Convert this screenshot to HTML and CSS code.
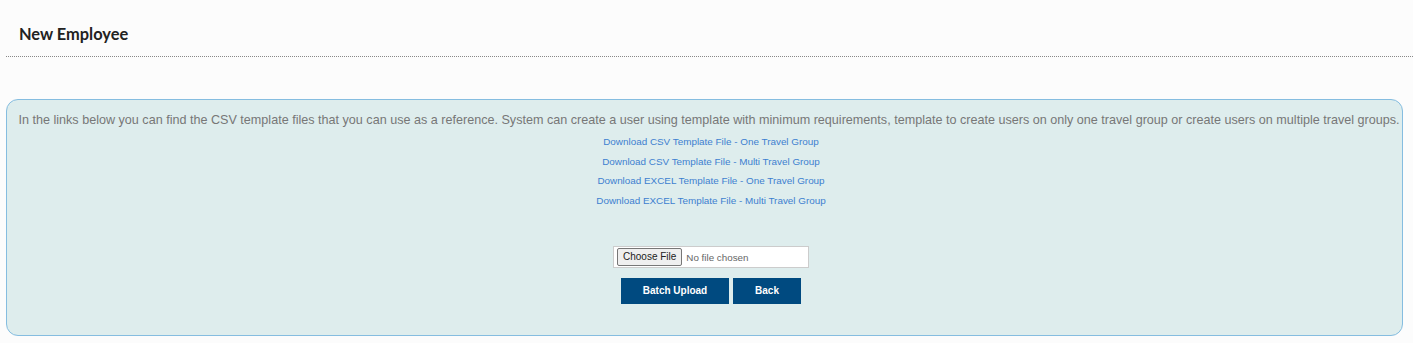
FILE: index.html
```html
<!DOCTYPE html>
<html lang="en">
<head>
    <meta charset="UTF-8">
    <title>New Employee</title>
    <link rel="stylesheet" href="styles.css">
</head>
<body>

<div class="page-header">
    <h2>New Employee</h2>
</div>

<div class="upload-panel">
    <p class="intro">In the links below you can find the CSV template files that you can use as a reference. System can create a user using template with minimum requirements, template to create users on only one travel group or create users on multiple travel groups.</p>
    <div class="template-links">
        <a href="#">Download CSV Template File - One Travel Group</a>
        <a href="#">Download CSV Template File - Multi Travel Group</a>
        <a href="#">Download EXCEL Template File - One Travel Group</a>
        <a href="#">Download EXCEL Template File - Multi Travel Group</a>
    </div>

    <form class="upload-form" onsubmit="event.preventDefault();">
        <input type="file" id="batchFile" name="batchFile" class="file-input">
        <div class="form-buttons">
            <button type="submit" class="btn btn-upload">Batch Upload</button>
            <button type="button" class="btn btn-back">Back</button>
        </div>
    </form>
</div>

</body>
</html>
```

FILE: styles.css
```css
body {
    margin: 0;
    padding: 0;
    background-color: #fcfcfc;
    font-family: Arial, "Liberation Sans", sans-serif;
}

.page-header {
    margin-left: 6px;
    padding: 26px 0 14px 13px;
    border-bottom: 1px dotted #888;
}

.page-header h2 {
    margin: 0;
    font-family: Lato, sans-serif;
    font-size: 16.4px;
    font-weight: bold;
    color: #222;
    line-height: 16px;
}

.upload-panel {
    margin: 42px 10px 0 6px;
    height: 235px;
    background-color: #deeded;
    border: 1px solid #85bde0;
    border-radius: 12px;
    padding: 0 0 0 13px;
    color: #777;
    text-align: center;
}

.intro {
    margin: 11px -4px 0 -8px;
    font-size: 12.6px;
    line-height: 18px;
    white-space: nowrap;
}

.template-links {
    display: flex;
    flex-direction: column;
    align-items: center;
    margin-top: 3px;
}

.template-links a {
    font-size: 9.9px;
    line-height: 19.7px;
    color: #3d7fd0;
    text-decoration: none;
}

.upload-form {
    display: flex;
    flex-direction: column;
    align-items: center;
    margin-top: 35px;
}

.file-input {
    width: 196px;
    height: 22px;
    box-sizing: border-box;
    padding: 1px 3px;
    background-color: white;
    border: 1px solid #ccc;
    font-family: Arial, "Liberation Sans", sans-serif;
    font-size: 9.8px;
    color: #666;
}

.file-input::file-selector-button {
    font-family: Arial, "Liberation Sans", sans-serif;
    font-size: 10px;
    color: #222;
    height: 18px;
    padding: 0 5px;
    margin-right: 4px;
    border: 1px solid #777;
    border-radius: 2px;
    background-color: #efefef;
}

.form-buttons {
    display: flex;
    gap: 4px;
    margin-top: 10px;
}

.btn {
    height: 26px;
    padding: 0;
    background-color: #004a80;
    border: none;
    color: white;
    font-family: Arial, "Liberation Sans", sans-serif;
    font-size: 10px;
    font-weight: bold;
    cursor: pointer;
}

.btn-upload {
    width: 108px;
}

.btn-back {
    width: 68px;
}
```
